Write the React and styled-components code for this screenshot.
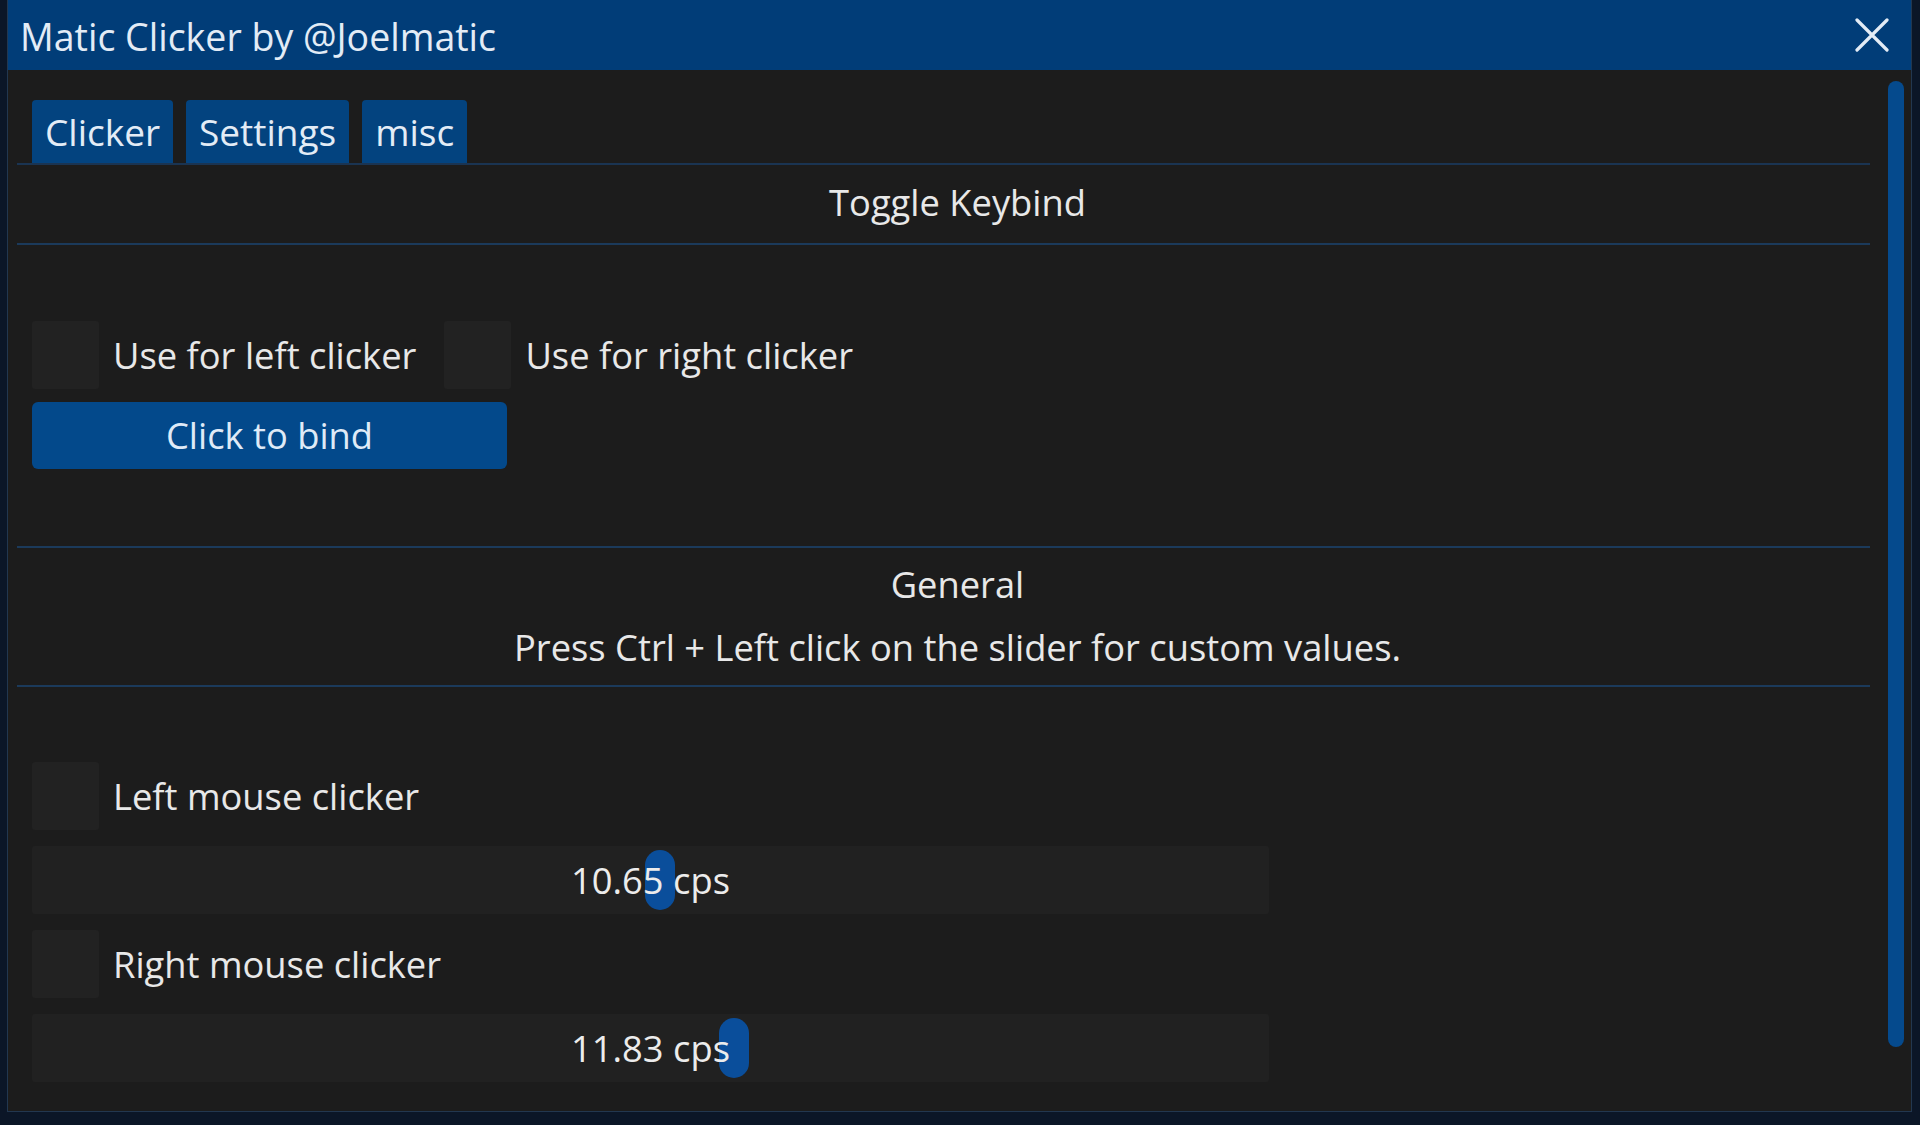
import React from 'react'
import styled, { createGlobalStyle } from 'styled-components'

const GlobalStyle = createGlobalStyle`
  html, body {
    margin: 0;
    padding: 0;
    background: #0b1627;
  }
  body {
    font-family: "Open Sans", "Noto Sans", sans-serif;
  }
`

const sliders = [
  { label: 'Left mouse clicker', value: 10.65 },
  { label: 'Right mouse clicker', value: 11.83 },
]

const MIN_CPS = 1
const MAX_CPS = 20

const CloseIcon = () => (
  <svg width="34" height="34" viewBox="0 0 34 34">
    <path d="M2 2 L32 32 M32 2 L2 32" stroke="#e3ecf6" strokeWidth="3.2" strokeLinecap="round" />
  </svg>
)

const Checkbox = ({ label }) => (
  <CheckItem>
    <Box />
    <Label>{label}</Label>
  </CheckItem>
)

const Slider = ({ value }) => {
  const pct = (value - MIN_CPS) / (MAX_CPS - MIN_CPS)
  return (
    <SliderFrame>
      <GrabTrack>
        <Grab style={{ left: `${pct * 100}%` }} />
      </GrabTrack>
      <SliderText>{value.toFixed(2)} cps</SliderText>
    </SliderFrame>
  )
}

const App = () => {
  return (
    <>
      <GlobalStyle />
      <Page>
        <Window>
          <TitleBar>
            <Title>Matic Clicker by @Joelmatic</Title>
            <CloseIcon />
          </TitleBar>
          <Body>
            <Content>
              <Tabs>
                <Tab>Clicker</Tab>
                <Tab>Settings</Tab>
                <Tab>misc</Tab>
              </Tabs>

              <SectionHeader $pad="6px 0 9px">
                <HeaderLine>Toggle Keybind</HeaderLine>
              </SectionHeader>

              <Group $top={76} $gap={13} $bottom={77}>
                <CheckRow>
                  <Checkbox label="Use for left clicker" />
                  <Checkbox label="Use for right clicker" />
                </CheckRow>
                <BindButton>Click to bind</BindButton>
              </Group>

              <SectionHeader $pad="5px 0 6px" $ruleTop>
                <HeaderLine>General</HeaderLine>
                <HeaderLine>Press Ctrl + Left click on the slider for custom values.</HeaderLine>
              </SectionHeader>

              <Group $top={75} $gap={16} $bottom={0}>
                {sliders.map(s => (
                  <React.Fragment key={s.label}>
                    <Checkbox label={s.label} />
                    <Slider value={s.value} />
                  </React.Fragment>
                ))}
              </Group>
            </Content>
            <ScrollTrack>
              <ScrollThumb />
            </ScrollTrack>
          </Body>
        </Window>
      </Page>
    </>
  )
}

export default App

const Page = styled.div`
  width: 1920px;
  height: 1125px;
  box-sizing: border-box;
  padding: 0 8px 13px 7px;
  background: #0b1627;
  display: flex;
`

const Window = styled.div`
  flex: 1;
  display: flex;
  flex-direction: column;
  background: #1c1c1c;
  border: 1px solid #22374f;
  border-top: none;
`

const TitleBar = styled.div`
  height: 70px;
  flex: none;
  display: flex;
  align-items: center;
  justify-content: space-between;
  padding: 0 22px 0 12px;
  background: #013d78;
  color: #e3ecf6;
`

const Title = styled.span`
  font-size: 37.5px;
  line-height: 1;
  padding-top: 4px;
`

const Body = styled.div`
  flex: 1;
  display: flex;
  min-height: 0;
`

const Content = styled.div`
  flex: 1;
  display: flex;
  flex-direction: column;
  padding: 30px 0 0 9px;
  color: #e8e8e8;
  font-size: 36.3px;
`

const Tabs = styled.div`
  display: flex;
  gap: 13px;
  padding-left: 15px;
  height: 63px;
  border-bottom: 2px solid #1a3452;
  font-size: 37px;
`

const Tab = styled.div`
  display: flex;
  align-items: center;
  padding: 0 13px;
  background: #03437f;
  color: #e3ecf6;
  border-radius: 4px 4px 0 0;
  line-height: 1;
`

const SectionHeader = styled.div`
  display: flex;
  flex-direction: column;
  align-items: center;
  padding: ${p => p.$pad};
  padding-left: 28px;
  border-top: ${p => (p.$ruleTop ? '2px solid #1b3a5b' : 'none')};
  border-bottom: 2px solid #1b3a5b;
`

const HeaderLine = styled.div`
  height: 63px;
  display: flex;
  align-items: center;
  line-height: 1;
`

const Group = styled.div`
  display: flex;
  flex-direction: column;
  align-items: flex-start;
  gap: ${p => p.$gap}px;
  margin: ${p => p.$top}px 0 ${p => p.$bottom}px;
  padding-left: 15px;
`

const CheckRow = styled.div`
  display: flex;
  gap: 28px;
`

const CheckItem = styled.div`
  display: flex;
  align-items: center;
  gap: 14px;
  height: 68px;
`

const Box = styled.div`
  width: 67px;
  height: 68px;
  background: #222222;
  border-radius: 3px;
`

const Label = styled.span`
  line-height: 1;
`

const BindButton = styled.div`
  width: 475px;
  height: 67px;
  display: flex;
  align-items: center;
  justify-content: center;
  background: #03498b;
  color: #dfeaf7;
  border-radius: 6px;
  line-height: 1;
`

const SliderFrame = styled.div`
  position: relative;
  width: 1237px;
  height: 68px;
  background: #212121;
  border-radius: 3px;
  display: flex;
  align-items: center;
  justify-content: center;
`

const GrabTrack = styled.div`
  position: absolute;
  top: 4px;
  bottom: 4px;
  left: 4px;
  right: 34px;
`

const Grab = styled.div`
  position: absolute;
  top: 0;
  bottom: 0;
  width: 30px;
  border-radius: 15px;
  background: #0a4e9b;
`

const SliderText = styled.span`
  position: relative;
  line-height: 1;
  color: #ececec;
`

const ScrollTrack = styled.div`
  width: 41px;
  flex: none;
  padding: 11px 0 0 18px;
  box-sizing: border-box;
`

const ScrollThumb = styled.div`
  width: 16px;
  height: 966px;
  border-radius: 8px;
  background: #054a8d;
`
